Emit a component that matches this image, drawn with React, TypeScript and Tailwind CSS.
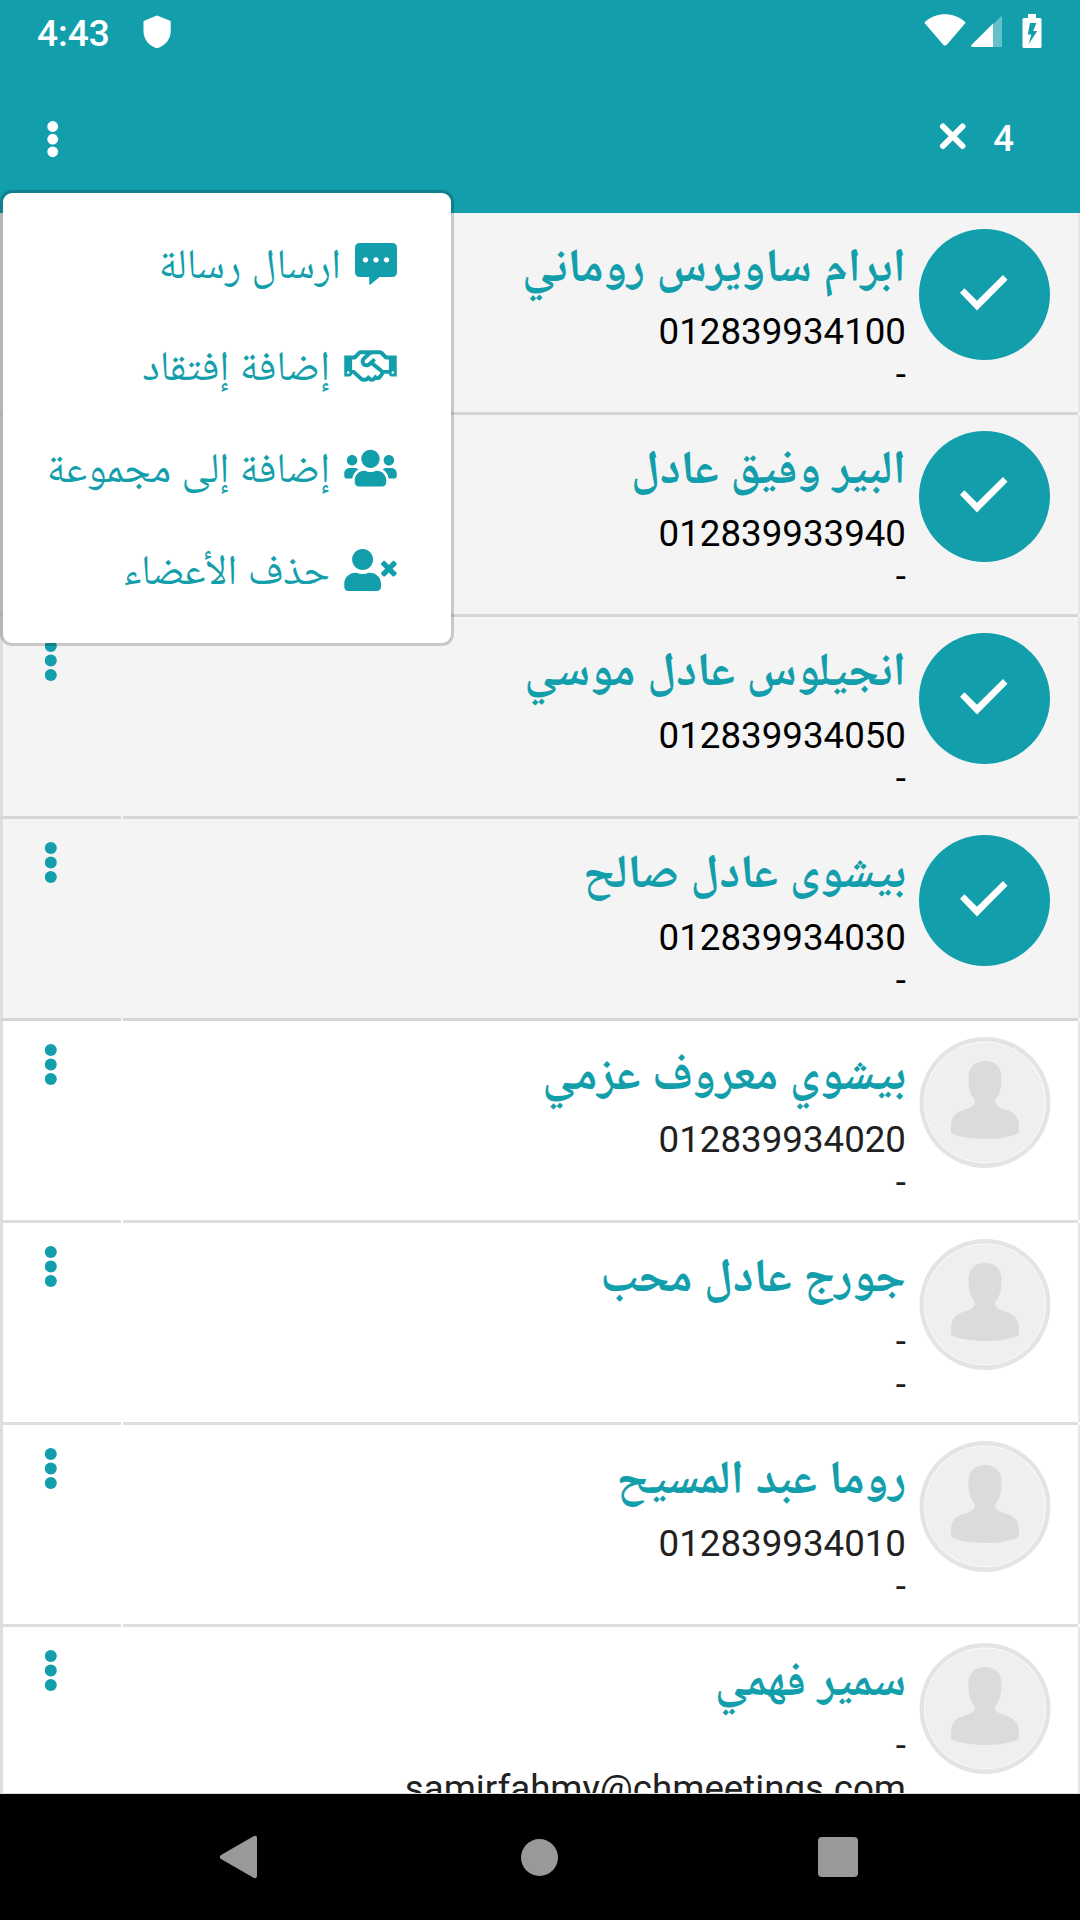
import { FaRegHandshake, FaUserTimes, FaUsers } from "react-icons/fa";

type Member = { name: string; phone: string; email: string; selected: boolean };

const members: Member[] = [
  { name: "ابرام ساويرس روماني", phone: "012839934100", email: "-", selected: true },
  { name: "البير وفيق عادل", phone: "012839933940", email: "-", selected: true },
  { name: "انجيلوس عادل موسي", phone: "012839934050", email: "-", selected: true },
  { name: "بيشوى عادل صالح", phone: "012839934030", email: "-", selected: true },
  { name: "بيشوي معروف عزمي", phone: "012839934020", email: "-", selected: false },
  { name: "جورج عادل محب", phone: "-", email: "-", selected: false },
  { name: "روما عبد المسيح", phone: "012839934010", email: "-", selected: false },
  { name: "سمير فهمي", phone: "-", email: "samirfahmy@chmeetings.com", selected: false },
];

function StatusBar() {
  return (
    <div className="flex h-[66px] items-start justify-between pr-[38px] pl-[37px] text-white">
      <div className="flex items-start">
        <span className="mt-[12px] w-[74px] text-[37px] leading-[44px] font-medium">4:43</span>
        <svg className="mt-[15px] ml-[32px] h-[34px] w-[28px]" viewBox="0 0 28 34" fill="currentColor">
          <path d="M14 0.5 L27.7 6 V16 C27.7 24.5 22 31 14 33.3 C6 31 0.5 24.5 0.5 16 V6 Z" />
        </svg>
      </div>
      <div className="flex items-start">
        <svg className="mt-[13px] h-[34px] w-[42px]" viewBox="0 0 42 34" fill="currentColor">
          <path d="M1 10.5 C0.4 9.700 0.600 9 1.400 8.400 C13 -1 29 -1 40.600 8.400 C41.400 9 41.500 9.700 41 10.500 L23 31.500 C21.800 33 20.200 33 19 31.500 Z" />
        </svg>
        <svg className="mt-[15px] ml-[5px] h-[33px] w-[32px]" viewBox="0 0 32 33">
          <path d="M0.500 30 L31 0.500 V32 H1.500 C0.500 32 0 31 0.500 30 Z" fill="#ffffff" opacity="0.35" />
          <path d="M0.500 30 L22 8.500 V32 H1.500 C0.500 32 0 31 0.500 30 Z" fill="#ffffff" />
        </svg>
        <svg className="mt-[14px] ml-[19px] h-[35px] w-[20px]" viewBox="0 0 20 35" fill="currentColor">
          <path
            fillRule="evenodd"
            d="M6 0 H14 V4 H18 Q19.500 4 19.500 5.500 V32.500 Q19.500 34 18 34 H2 Q0.500 34 0.500 32.500 V5.500 Q0.500 4 2 4 H6 Z M8 9 L5.800 20.500 H9.300 L6.700 30 L15.300 17 H11.200 L14.400 9 Z"
          />
        </svg>
      </div>
    </div>
  );
}

function Toolbar() {
  return (
    <div className="flex h-[147px] items-start justify-between pr-[66px] pl-[47px] text-white">
      <svg className="mt-[55px] h-[37px] w-[12px]" viewBox="0 0 12 37" fill="currentColor">
        <circle cx="5.7" cy="5.500" r="5.400" />
        <circle cx="5.700" cy="18.200" r="5.400" />
        <circle cx="5.700" cy="30.800" r="5.400" />
      </svg>
      <div className="flex items-start">
        <svg className="mt-[57px] h-[28px] w-[28px]" viewBox="0 0 28 28" fill="none" stroke="currentColor" strokeWidth="6" strokeLinecap="round">
          <path d="M4 3.500 L23.500 23 M23.500 3.500 L4 23" />
        </svg>
        <span className="mt-[51px] ml-[26px] text-[36.500px] leading-[44px] font-medium">4</span>
      </div>
    </div>
  );
}

function Dots() {
  return (
    <svg className="mt-[23px] h-[42px] w-[12px] shrink-0 text-[#139eac]" viewBox="0 0 12 42" fill="currentColor">
      <circle cx="5.800" cy="6" r="6" />
      <circle cx="5.800" cy="20.600" r="6" />
      <circle cx="5.800" cy="35" r="6" />
    </svg>
  );
}

function Avatar() {
  return (
    <svg className="h-[131px] w-[132px]" viewBox="0 0 132 131">
      <circle cx="66" cy="65.500" r="65.500" fill="#e4e4e4" />
      <circle cx="66" cy="65.500" r="61" fill="#fafafa" />
      <circle cx="66" cy="65.500" r="60" fill="#efefef" />
      <path
        fill="#dbdbdb"
        d="M66 24 C77 24 83 31 82.500 42 C82.500 53 80 58 76.500 63 C75 65.500 77 68 80 70 C87 74 99.500 73 100 89 V95 C99.500 98 84 102 66 102 C48 102 32.500 98 32 95 V89 C32.500 73 45 74 52 70 C55 68 57 65.500 55.500 63 C52 58 49.500 53 49.500 42 C49 31 55 24 66 24 Z"
      />
    </svg>
  );
}

function CheckMark() {
  return (
    <svg className="h-[36px] w-[48px]" viewBox="0 0 48 36" fill="currentColor">
      <path d="M0 17.700 L4.400 13.200 L17 25.700 L43 0 L47.500 4.700 L17 35.400 Z" />
    </svg>
  );
}

function Row({ member }: { member: Member }) {
  return (
    <div className={member.selected ? "h-[202px] shrink-0 bg-[#f4f4f4] text-black" : "h-[202px] shrink-0 bg-white text-[#212121]"}>
      <div className="flex h-[199px] items-start border-r-2 border-l-[3px] border-r-[#e6e6e6] border-l-[#dedede] pl-[42px]">
        <Dots />
        <div className="flex flex-1 flex-col items-end pr-[13px] text-right">
          <div dir="rtl" className="mt-[22px] h-[75px] whitespace-nowrap text-[47.300px] leading-[60px] font-bold text-[#139eac]">
            {member.name}
          </div>
          <div className="h-[43px] text-[36.700px] leading-[43px]">{member.phone}</div>
          <div className="h-[43px] text-[36.700px] leading-[43px]">{member.email}</div>
        </div>
        <div className="mt-[16px] mr-[27px] w-[132px] shrink-0">
          {member.selected ? (
            <div className="flex h-[131px] w-[131px] items-center justify-center rounded-full bg-[#139eac] pr-[1px] pb-[4px] text-white">
              <CheckMark />
            </div>
          ) : (
            <Avatar />
          )}
        </div>
      </div>
      <div className="flex h-[3px] gap-[2px] pr-[2px]">
        <div className={member.selected ? "w-[121px] bg-[#d6d6d6]" : "w-[121px] bg-[#dedede]"} />
        <div className={member.selected ? "flex-1 bg-[#d6d6d6]" : "flex-1 bg-[#dedede]"} />
      </div>
    </div>
  );
}

function MessageIcon() {
  return (
    <svg className="h-[42px] w-[42px]" viewBox="0 0 42 42" fill="currentColor">
      <path
        fillRule="evenodd"
        d="M5 0 H37 Q42 0 42 5 V29 Q42 34 37 34 H24.500 L15.500 41.500 Q14.200 42.300 14.200 41 V34 H5 Q0 34 0 29 V5 Q0 0 5 0 Z M10.500 14.200 a2.700 2.700 0 1 0 0.010 0 Z M21 14.200 a2.700 2.700 0 1 0 0.010 0 Z M31.500 14.200 a2.700 2.700 0 1 0 0.010 0 Z"
      />
    </svg>
  );
}

function ActionMenu() {
  const items = [
    { label: "ارسال رسالة", icon: <MessageIcon /> },
    { label: "إضافة إفتقاد", icon: <FaRegHandshake className="h-[42px] w-[53px]" /> },
    { label: "إضافة إلى مجموعة", icon: <FaUsers className="h-[42px] w-[53px]" /> },
    { label: "حذف الأعضاء", icon: <FaUserTimes className="h-[42px] w-[53px]" /> },
  ];
  return (
    <div
      dir="rtl"
      className="absolute top-[193px] left-[3px] flex h-[450px] w-[448px] flex-col rounded-[9px] bg-white pt-[20px] pr-[54.500px] text-[#139eac] shadow-[0_0_0_3px_rgba(0,0,0,0.18)]"
    >
      {items.map((item) => (
        <div key={item.label} className="flex h-[102px] items-center gap-[13.500px]">
          {item.icon}
          <span className="whitespace-nowrap text-[42px] leading-[60px]">{item.label}</span>
        </div>
      ))}
    </div>
  );
}

function NavBar() {
  return (
    <div className="flex h-[126px] items-center justify-between bg-black pr-[222px] pl-[219px] text-[#999999]">
      <svg className="h-[44px] w-[39px]" viewBox="0 0 39 44" fill="currentColor">
        <path d="M2 20 L34.500 1.200 Q38 0 38 3 V41 Q38 44 34.500 42.800 L2 24 Q-0.500 22 2 20 Z" />
      </svg>
      <div className="ml-[2px] h-[37px] w-[37px] rounded-full bg-[#999999]" />
      <div className="h-[40px] w-[40px] rounded-[4px] bg-[#999999]" />
    </div>
  );
}

export default function App() {
  return (
    <div className="relative flex h-[1920px] w-[1080px] flex-col overflow-hidden bg-white font-['Roboto','Noto_Naskh_Arabic','Noto_Sans_Arabic',sans-serif]">
      <header className="h-[213px] shrink-0 bg-[#139eac]">
        <StatusBar />
        <Toolbar />
      </header>
      <main className="flex h-[1581px] flex-col overflow-hidden border-b border-[#dedede]">
        {members.map((m) => (
          <Row key={m.name} member={m} />
        ))}
      </main>
      <NavBar />
      <ActionMenu />
    </div>
  );
}
